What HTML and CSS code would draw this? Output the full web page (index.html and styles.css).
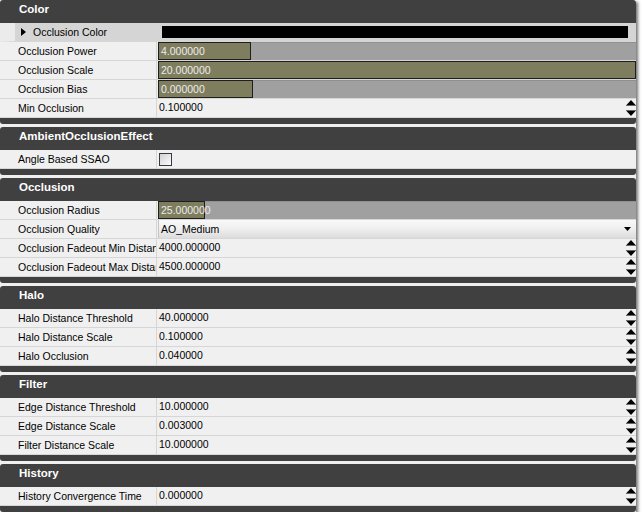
FILE: index.html
```html
<!DOCTYPE html>
<html>
<head>
<meta charset="utf-8">
<link rel="stylesheet" href="styles.css">
</head>
<body>
<div class="grid">
  <section class="cat">
    <div class="cat-head">Color</div>
    <div class="row sub">
      <div class="label"><span class="tri"></span>Occlusion Color</div>
      <div class="val swatch-cell"><div class="swatch"></div></div>
    </div>
    <div class="row">
      <div class="label">Occlusion Power</div>
      <div class="val"><div class="slider"><div class="fill" style="width:93px"></div><span class="stext">4.000000</span></div></div>
    </div>
    <div class="row">
      <div class="label">Occlusion Scale</div>
      <div class="val"><div class="slider"><div class="fill" style="width:100%"></div><span class="stext">20.000000</span></div></div>
    </div>
    <div class="row">
      <div class="label">Occlusion Bias</div>
      <div class="val"><div class="slider"><div class="fill" style="width:95px"></div><span class="stext">0.000000</span></div></div>
    </div>
    <div class="row">
      <div class="label">Min Occlusion</div>
      <div class="val spin"><span class="num">0.100000</span><svg class="spinner" width="10" height="18" viewBox="0 0 10 18"><polygon points="0.5,6 5,1 9.5,6" fill="#000"/><rect x="0" y="6" width="10" height="1" fill="#666"/><rect x="0" y="11" width="10" height="1" fill="#666"/><polygon points="0.5,12 9.5,12 5,17" fill="#000"/></svg></div>
    </div>
    <div class="cat-foot"></div>
  </section>

  <section class="cat">
    <div class="cat-head">AmbientOcclusionEffect</div>
    <div class="row">
      <div class="label">Angle Based SSAO</div>
      <div class="val"><span class="check"></span></div>
    </div>
    <div class="cat-foot"></div>
  </section>

  <section class="cat">
    <div class="cat-head">Occlusion</div>
    <div class="row">
      <div class="label">Occlusion Radius</div>
      <div class="val"><div class="slider"><div class="fill" style="width:47px"></div><span class="stext">25.000000</span></div></div>
    </div>
    <div class="row">
      <div class="label">Occlusion Quality</div>
      <div class="val"><div class="combo"><span>AO_Medium</span><svg width="7" height="4" viewBox="0 0 7 4"><polygon points="0,0 7,0 3.5,4" fill="#000"/></svg></div></div>
    </div>
    <div class="row">
      <div class="label">Occlusion Fadeout Min Distance</div>
      <div class="val spin"><span class="num">4000.000000</span><svg class="spinner" width="10" height="18" viewBox="0 0 10 18"><polygon points="0.5,6 5,1 9.5,6" fill="#000"/><rect x="0" y="6" width="10" height="1" fill="#666"/><rect x="0" y="11" width="10" height="1" fill="#666"/><polygon points="0.5,12 9.5,12 5,17" fill="#000"/></svg></div>
    </div>
    <div class="row">
      <div class="label">Occlusion Fadeout Max Distance</div>
      <div class="val spin"><span class="num">4500.000000</span><svg class="spinner" width="10" height="18" viewBox="0 0 10 18"><polygon points="0.5,6 5,1 9.5,6" fill="#000"/><rect x="0" y="6" width="10" height="1" fill="#666"/><rect x="0" y="11" width="10" height="1" fill="#666"/><polygon points="0.5,12 9.5,12 5,17" fill="#000"/></svg></div>
    </div>
    <div class="cat-foot"></div>
  </section>

  <section class="cat">
    <div class="cat-head">Halo</div>
    <div class="row">
      <div class="label">Halo Distance Threshold</div>
      <div class="val spin"><span class="num">40.000000</span><svg class="spinner" width="10" height="18" viewBox="0 0 10 18"><polygon points="0.5,6 5,1 9.5,6" fill="#000"/><rect x="0" y="6" width="10" height="1" fill="#666"/><rect x="0" y="11" width="10" height="1" fill="#666"/><polygon points="0.5,12 9.5,12 5,17" fill="#000"/></svg></div>
    </div>
    <div class="row">
      <div class="label">Halo Distance Scale</div>
      <div class="val spin"><span class="num">0.100000</span><svg class="spinner" width="10" height="18" viewBox="0 0 10 18"><polygon points="0.5,6 5,1 9.5,6" fill="#000"/><rect x="0" y="6" width="10" height="1" fill="#666"/><rect x="0" y="11" width="10" height="1" fill="#666"/><polygon points="0.5,12 9.5,12 5,17" fill="#000"/></svg></div>
    </div>
    <div class="row">
      <div class="label">Halo Occlusion</div>
      <div class="val spin"><span class="num">0.040000</span><svg class="spinner" width="10" height="18" viewBox="0 0 10 18"><polygon points="0.5,6 5,1 9.5,6" fill="#000"/><rect x="0" y="6" width="10" height="1" fill="#666"/><rect x="0" y="11" width="10" height="1" fill="#666"/><polygon points="0.5,12 9.5,12 5,17" fill="#000"/></svg></div>
    </div>
    <div class="cat-foot"></div>
  </section>

  <section class="cat">
    <div class="cat-head">Filter</div>
    <div class="row">
      <div class="label">Edge Distance Threshold</div>
      <div class="val spin"><span class="num">10.000000</span><svg class="spinner" width="10" height="18" viewBox="0 0 10 18"><polygon points="0.5,6 5,1 9.5,6" fill="#000"/><rect x="0" y="6" width="10" height="1" fill="#666"/><rect x="0" y="11" width="10" height="1" fill="#666"/><polygon points="0.5,12 9.5,12 5,17" fill="#000"/></svg></div>
    </div>
    <div class="row">
      <div class="label">Edge Distance Scale</div>
      <div class="val spin"><span class="num">0.003000</span><svg class="spinner" width="10" height="18" viewBox="0 0 10 18"><polygon points="0.5,6 5,1 9.5,6" fill="#000"/><rect x="0" y="6" width="10" height="1" fill="#666"/><rect x="0" y="11" width="10" height="1" fill="#666"/><polygon points="0.5,12 9.5,12 5,17" fill="#000"/></svg></div>
    </div>
    <div class="row">
      <div class="label">Filter Distance Scale</div>
      <div class="val spin"><span class="num">10.000000</span><svg class="spinner" width="10" height="18" viewBox="0 0 10 18"><polygon points="0.5,6 5,1 9.5,6" fill="#000"/><rect x="0" y="6" width="10" height="1" fill="#666"/><rect x="0" y="11" width="10" height="1" fill="#666"/><polygon points="0.5,12 9.5,12 5,17" fill="#000"/></svg></div>
    </div>
    <div class="cat-foot"></div>
  </section>

  <section class="cat">
    <div class="cat-head">History</div>
    <div class="row">
      <div class="label">History Convergence Time</div>
      <div class="val spin"><span class="num">0.000000</span><svg class="spinner" width="10" height="18" viewBox="0 0 10 18"><polygon points="0.5,6 5,1 9.5,6" fill="#000"/><rect x="0" y="6" width="10" height="1" fill="#666"/><rect x="0" y="11" width="10" height="1" fill="#666"/><polygon points="0.5,12 9.5,12 5,17" fill="#000"/></svg></div>
    </div>
    <div class="cat-foot"></div>
  </section>
</div>
</body>
</html>
```
FILE: styles.css
```css
* { box-sizing: border-box; }
body {
  margin: 0;
  background: #ffffff;
  font-family: "Liberation Sans", Arial, sans-serif;
  font-size: 10.5px;
  color: #000;
}
.grid {
  width: 636px;
  background: #efefef;
  box-shadow: 2px 2px 3px rgba(0, 0, 0, 0.55);
}
.cat {
  background: #404040;
  border-radius: 3px;
  overflow: hidden;
  margin-bottom: 3px;
}
.cat:last-child { margin-bottom: 0; }
.cat-head {
  height: 23px;
  line-height: 19px;
  padding-left: 19px;
  color: #ffffff;
  font-weight: bold;
  font-size: 11.5px;
}
.cat-foot { height: 6px; }
.row {
  display: grid;
  grid-template-columns: 157px 1fr;
  height: 19px;
  border-bottom: 1px solid #d6d6d6;
  background: #f0f0f0;
}
.label {
  padding-left: 18px;
  border-right: 1px solid #d6d6d6;
  line-height: 18px;
  white-space: nowrap;
  overflow: hidden;
}
.row.sub {
  grid-template-columns: 142px 1fr;
  border-left: 15px solid #ebebeb;
  background: #d5d5d5;
}
.row.sub .label {
  padding-left: 6px;
  display: flex;
  align-items: center;
}
.tri {
  width: 0;
  height: 0;
  border-left: 5px solid #000;
  border-top: 4.5px solid transparent;
  border-bottom: 4.5px solid transparent;
  margin-right: 7px;
}
.val {
  display: flex;
  align-items: center;
  padding-left: 1px;
  min-width: 0;
  height: 18px;
}
.swatch-cell { padding-left: 5px; padding-right: 8px; }
.swatch {
  flex: 1;
  height: 12px;
  background: #000;
}
.slider {
  flex: 1;
  height: 18px;
  display: grid;
  background: #a0a0a0;
  border-top: 1px solid #909090;
}
.fill {
  grid-area: 1 / 1;
  justify-self: start;
  margin-top: -1px;
  height: 18px;
  background: #7e7d5e;
  border: 1px solid #1e1e1e;
}
.stext {
  grid-area: 1 / 1;
  position: relative;
  padding-left: 3px;
  margin-top: -1px;
  line-height: 18px;
  color: #ececec;
}
.spin { align-items: flex-start; }
.num {
  line-height: 14px;
  padding-top: 1px;
  padding-left: 1px;
}
.spinner {
  margin-left: auto;
  flex: none;
}
.combo {
  flex: 1;
  height: 18px;
  display: flex;
  align-items: center;
  justify-content: space-between;
  padding-left: 2px;
  padding-right: 5px;
  border-left: 1px solid #c4c4c4;
  background: linear-gradient(#f8f8f8, #f0f0f0 45%, #dcdcdc);
}
.check {
  width: 13px;
  height: 13px;
  margin-left: 1px;
  border: 1px solid #333a44;
  background: linear-gradient(135deg, #d2d2d2, #fbfbfb);
}
```
